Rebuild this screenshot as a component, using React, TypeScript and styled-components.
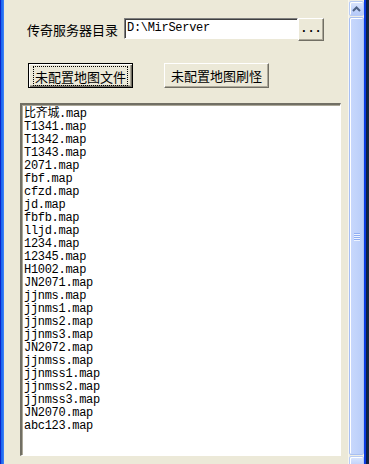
import styled, { createGlobalStyle } from "styled-components";

const maps = [
  "比齐城.map",
  "T1341.map",
  "T1342.map",
  "T1343.map",
  "2071.map",
  "fbf.map",
  "cfzd.map",
  "jd.map",
  "fbfb.map",
  "lljd.map",
  "1234.map",
  "12345.map",
  "H1002.map",
  "JN2071.map",
  "jjnms.map",
  "jjnms1.map",
  "jjnms2.map",
  "jjnms3.map",
  "JN2072.map",
  "jjnmss.map",
  "jjnmss1.map",
  "jjnmss2.map",
  "jjnmss3.map",
  "JN2070.map",
  "abc123.map",
];

function App() {
  return (
    <>
      <GlobalStyle />
      <Window>
        <LeftFrame />
        <Main>
          <PathRow>
            <Label>传奇服务器目录</Label>
            <PathField>
              <TextBox>D:\MirServer</TextBox>
              <Button $small>...</Button>
            </PathField>
          </PathRow>
          <ButtonRow>
            <Button $focused>
              <FocusRect>未配置地图文件</FocusRect>
            </Button>
            <Button>未配置地图刷怪</Button>
          </ButtonRow>
          <ListBox>
            {maps.map((name) => (
              <Item key={name}>{name}</Item>
            ))}
          </ListBox>
        </Main>
        <ScrollBar>
          <ArrowButton>
            <svg width="9" height="6" viewBox="0 0 9 6">
              <path
                d="M1 5 L4.5 1.5 L8 5"
                fill="none"
                stroke="#4d6185"
                strokeWidth="2"
              />
            </svg>
          </ArrowButton>
          <Thumb>
            <Grip>
              <span />
              <span />
              <span />
              <span />
            </Grip>
          </Thumb>
          <ArrowButton />
        </ScrollBar>
        <RightFrame />
      </Window>
    </>
  );
}

export default App;

const GlobalStyle = createGlobalStyle`
  html, body {
    margin: 0;
    padding: 0;
    background: #ece9d8;
  }
`;

const Window = styled.div`
  display: flex;
  width: 369px;
  height: 464px;
  overflow: hidden;
  background: #ece9d8;
  font-family: "Noto Sans CJK SC", "Liberation Sans", sans-serif;
  color: #000;
`;

const LeftFrame = styled.div`
  width: 4px;
  flex-shrink: 0;
  background: linear-gradient(90deg, #0a24c8 0, #0a24c8 1px, #1661ee 1px, #2a74f4 3px, #4a8af6 4px);
`;

const Main = styled.div`
  flex: 1;
  display: flex;
  flex-direction: column;
  padding-top: 18px;
`;

const PathRow = styled.div`
  display: flex;
  align-items: flex-start;
  padding-left: 23px;
  gap: 6px;
`;

const Label = styled.span`
  font-size: 13px;
  line-height: 21px;
  padding-top: 1px;
  white-space: nowrap;
`;

const PathField = styled.div`
  display: flex;
  align-items: flex-start;
`;

const TextBox = styled.div`
  box-sizing: border-box;
  width: 174px;
  height: 21px;
  background: #fff;
  border-top: 1px solid #808080;
  border-left: 1px solid #808080;
  border-bottom: 1px solid #fff;
  border-right: 1px solid #fff;
  box-shadow: inset 1px 1px #404040;
  padding: 2px 0 0 2px;
  font-family: "Liberation Mono", monospace;
  font-size: 12px;
  letter-spacing: -0.3px;
  line-height: 15px;
  white-space: nowrap;
`;

const Button = styled.div<{ $focused?: boolean; $small?: boolean }>`
  box-sizing: border-box;
  display: flex;
  align-items: center;
  justify-content: center;
  width: ${(p) => (p.$small ? "26px" : "105px")};
  height: ${(p) => (p.$small ? "23px" : "25px")};
  background: #ece9d8;
  border: 1px solid;
  border-color: ${(p) =>
    p.$focused ? "#000" : "#fff #716f64 #716f64 #fff"};
  box-shadow: ${(p) =>
    p.$focused
      ? "inset 1px 1px #fff, inset -1px -1px #716f64, inset -2px -2px #aca899"
      : "inset -1px -1px #aca899"};
  font-size: ${(p) => (p.$small ? "12px" : "13px")};
  font-family: ${(p) =>
    p.$small ? '"Liberation Mono", monospace' : '"Noto Sans CJK SC", sans-serif'};
  font-weight: ${(p) => (p.$small ? 700 : 400)};
  line-height: 15px;
  white-space: nowrap;
`;

const FocusRect = styled.span`
  outline: 1px dotted #000;
  outline-offset: 0;
  padding: 2px 1px 1px;
`;

const ButtonRow = styled.div`
  display: flex;
  gap: 31px;
  padding-left: 24px;
  margin-top: 22px;
`;

const ListBox = styled.div`
  box-sizing: border-box;
  width: 321px;
  height: 353px;
  margin: 15px 0 0 16px;
  background: #fff;
  border-top: 2px solid #716f64;
  border-left: 2px solid #716f64;
  border-bottom: 1px solid #fff;
  border-right: 1px solid #fff;
  box-shadow: inset 1px 1px #aca899, 0 0 0 1px #ece9d8;
  padding: 3px 0 0 2px;
  overflow: hidden;
`;

const Item = styled.div`
  font-family: "Liberation Mono", "Noto Sans CJK SC", monospace;
  font-size: 12px;
  letter-spacing: -0.3px;
  line-height: 13px;
  height: 13px;
  white-space: nowrap;
`;

const ScrollBar = styled.div`
  width: 15px;
  flex-shrink: 0;
  display: flex;
  flex-direction: column;
  gap: 1px;
  padding-top: 1px;
  background: #eeede5;
  border-left: 1px solid #f7f6f0;
`;

const ArrowButton = styled.div`
  box-sizing: border-box;
  height: 15px;
  flex-shrink: 0;
  display: flex;
  align-items: center;
  justify-content: center;
  border: 1px solid #b7cbf5;
  border-radius: 2px;
  background: linear-gradient(180deg, #dce6fd, #c1d3fb 60%, #b5c9f8);
  box-shadow: inset 1px 1px #fff;
`;

const Thumb = styled.div`
  box-sizing: border-box;
  height: 438px;
  flex-shrink: 0;
  display: flex;
  align-items: center;
  justify-content: center;
  border: 1px solid #a8bff2;
  border-radius: 2px;
  background: linear-gradient(90deg, #c9d8fc, #c1d3fb 50%, #b9cdf9);
  box-shadow: inset 1px 1px #fff;
`;

const Grip = styled.div`
  display: flex;
  flex-direction: column;
  gap: 1px;

  span {
    display: block;
    width: 6px;
    height: 1px;
    background: #8faef3;
    box-shadow: 0 1px #eef3fe;
  }
`;

const RightFrame = styled.div`
  width: 5px;
  flex-shrink: 0;
  background: linear-gradient(
    90deg,
    #0a3ae0 0,
    #0a3ae0 2px,
    #0b1a4a 2px,
    #142a3a 5px
  );
`;
